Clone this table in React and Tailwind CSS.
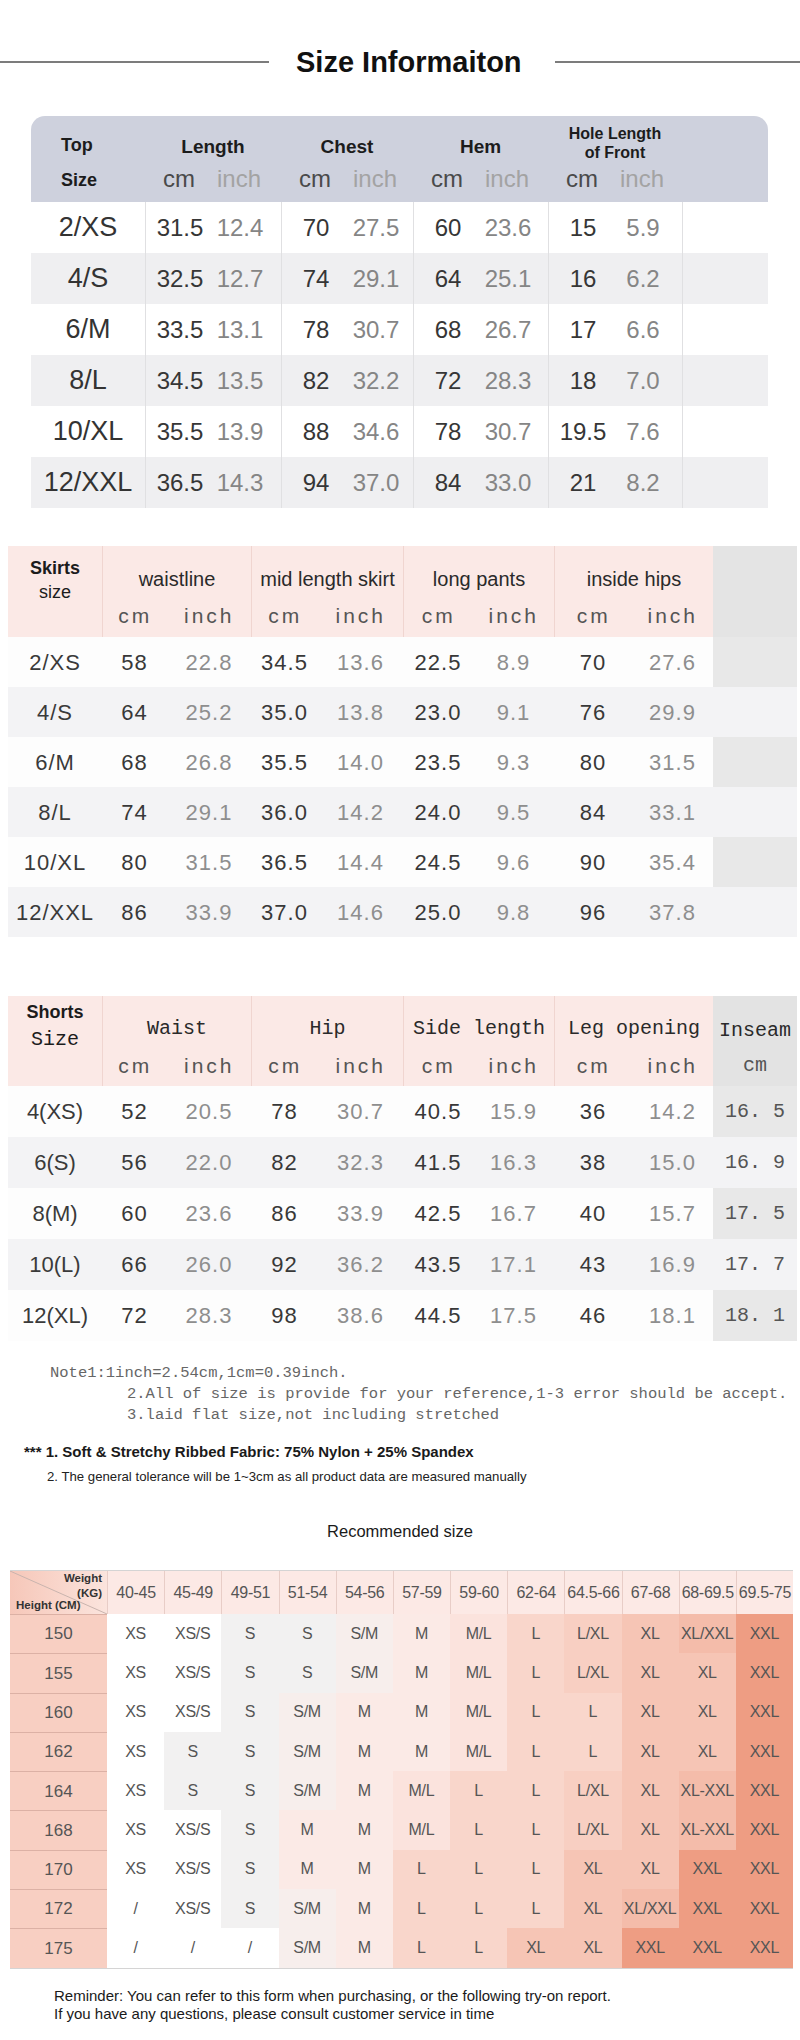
import React from 'react';

const sans = "font-['Liberation_Sans',Arial,sans-serif]";
const mono = "font-['Liberation_Mono','Courier_New',monospace]";

const topHeads = ['Length', 'Chest', 'Hem', 'Hole'];
const topW = ['w-[136px]', 'w-[132px]', 'w-[135px]', 'w-[134px]'];
const topRows = [
  ['2/XS', '31.5', '12.4', '70', '27.5', '60', '23.6', '15', '5.9'],
  ['4/S', '32.5', '12.7', '74', '29.1', '64', '25.1', '16', '6.2'],
  ['6/M', '33.5', '13.1', '78', '30.7', '68', '26.7', '17', '6.6'],
  ['8/L', '34.5', '13.5', '82', '32.2', '72', '28.3', '18', '7.0'],
  ['10/XL', '35.5', '13.9', '88', '34.6', '78', '30.7', '19.5', '7.6'],
  ['12/XXL', '36.5', '14.3', '94', '37.0', '84', '33.0', '21', '8.2'],
];

// sub columns shared by skirts + shorts (cm / inch pairs)
const subW = ['w-[65px]', 'w-[84px]', 'w-[67px]', 'w-[85px]', 'w-[70px]', 'w-[81px]', 'w-[78px]', 'w-[81px]'];
const groupW = ['w-[149px]', 'w-[152px]', 'w-[151px]', 'w-[159px]'];

const skirtRows = [
  ['2/XS', '58', '22.8', '34.5', '13.6', '22.5', '8.9', '70', '27.6'],
  ['4/S', '64', '25.2', '35.0', '13.8', '23.0', '9.1', '76', '29.9'],
  ['6/M', '68', '26.8', '35.5', '14.0', '23.5', '9.3', '80', '31.5'],
  ['8/L', '74', '29.1', '36.0', '14.2', '24.0', '9.5', '84', '33.1'],
  ['10/XL', '80', '31.5', '36.5', '14.4', '24.5', '9.6', '90', '35.4'],
  ['12/XXL', '86', '33.9', '37.0', '14.6', '25.0', '9.8', '96', '37.8'],
];

const shortRows = [
  ['4(XS)', '52', '20.5', '78', '30.7', '40.5', '15.9', '36', '14.2', '16. 5'],
  ['6(S)', '56', '22.0', '82', '32.3', '41.5', '16.3', '38', '15.0', '16. 9'],
  ['8(M)', '60', '23.6', '86', '33.9', '42.5', '16.7', '40', '15.7', '17. 5'],
  ['10(L)', '66', '26.0', '92', '36.2', '43.5', '17.1', '43', '16.9', '17. 7'],
  ['12(XL)', '72', '28.3', '98', '38.6', '44.5', '17.5', '46', '18.1', '18. 1'],
];

const weights = ['40-45', '45-49', '49-51', '51-54', '54-56', '57-59', '59-60', '62-64', '64.5-66', '67-68', '68-69.5', '69.5-75'];
const rec = [
  ['150', ['XS', 'XS/S', 'S', 'S', 'S/M', 'M', 'M/L', 'L', 'L/XL', 'XL', 'XL/XXL', 'XXL']],
  ['155', ['XS', 'XS/S', 'S', 'S', 'S/M', 'M', 'M/L', 'L', 'L/XL', 'XL', 'XL', 'XXL']],
  ['160', ['XS', 'XS/S', 'S', 'S/M', 'M', 'M', 'M/L', 'L', 'L', 'XL', 'XL', 'XXL']],
  ['162', ['XS', 'S', 'S', 'S/M', 'M', 'M', 'M/L', 'L', 'L', 'XL', 'XL', 'XXL']],
  ['164', ['XS', 'S', 'S', 'S/M', 'M', 'M/L', 'L', 'L', 'L/XL', 'XL', 'XL-XXL', 'XXL']],
  ['168', ['XS', 'XS/S', 'S', 'M', 'M', 'M/L', 'L', 'L', 'L/XL', 'XL', 'XL-XXL', 'XXL']],
  ['170', ['XS', 'XS/S', 'S', 'M', 'M', 'L', 'L', 'L', 'XL', 'XL', 'XXL', 'XXL']],
  ['172', ['/', 'XS/S', 'S', 'S/M', 'M', 'L', 'L', 'L', 'XL', 'XL/XXL', 'XXL', 'XXL']],
  ['175', ['/', '/', '/', 'S/M', 'M', 'L', 'L', 'XL', 'XL', 'XXL', 'XXL', 'XXL']],
];

const sizeBg = {
  '/': 'bg-white',
  XS: 'bg-white',
  'XS/S': 'bg-white',
  S: 'bg-[#f2f1f1]',
  'S/M': 'bg-[#f7eeec]',
  M: 'bg-[#fbeae6]',
  'M/L': 'bg-[#fbe3dd]',
  L: 'bg-[#f9d6cb]',
  'L/XL': 'bg-[#f8cfc2]',
  XL: 'bg-[#f6c5b5]',
  'XL/XXL': 'bg-[#f4bcaa]',
  'XL-XXL': 'bg-[#f4bcaa]',
  XXL: 'bg-[#ee9d83]',
};

function TopTable() {
  return (
    <div className="ml-[31px] mt-[37px] w-[737px]">
      <div className="flex h-[86px] rounded-t-[14px] bg-[#ced1dd] text-[#1c1c1c]">
        <div className="w-[114px] pl-[30px] pt-[18px] text-[18px] font-bold leading-[22px]">
          <div>Top</div>
          <div className="mt-[13px]">Size</div>
        </div>
        {topHeads.map((h, i) => (
          <div key={h} className={`${topW[i]} flex flex-col pt-[11px]`}>
            <div className="flex h-[40px] flex-col items-center justify-center font-bold">
              {h === 'Hole' ? (
                <div className="-mt-[8px] text-center text-[16px] leading-[19px]">
                  <div>Hole Length</div>
                  <div>of Front</div>
                </div>
              ) : (
                <span className="text-[19px] leading-[24px]">{h}</span>
              )}
            </div>
            <div className="flex text-[24px] leading-[24px]">
              <span className="w-[68px] text-center text-[#4a4a4a]">cm</span>
              <span className="w-[52px] text-center text-[#a3a3a3]">inch</span>
            </div>
          </div>
        ))}
      </div>
      {topRows.map((r, idx) => (
        <div
          key={r[0]}
          className={`flex h-[51px] items-center ${idx % 2 ? 'bg-[#efeff1]' : 'bg-white'}`}
        >
          <div className="w-[114px] text-center text-[27px] text-[#333]">{r[0]}</div>
          {topW.map((w, i) => (
            <div key={w} className={`${w} flex h-full items-center border-l border-[#e0e0e2] text-[24px]`}>
              <span className="w-[68px] text-center text-[#363636]">{r[1 + i * 2]}</span>
              <span className="w-[52px] text-center text-[#858585]">{r[2 + i * 2]}</span>
            </div>
          ))}
          <div className="h-full w-[86px] border-l border-[#e0e0e2]" />
        </div>
      ))}
    </div>
  );
}

function GroupHead({ title, w, idx, titleClass, unitClass }) {
  return (
    <div className={`${w} flex flex-col border-l border-[#f0d5d0] bg-[#fbe9e6] pt-[21px]`}>
      <div className={`text-center leading-[24px] text-[#2a2a2a] ${titleClass}`}>{title}</div>
      <div className={`mt-[11px] flex leading-[28px] text-[#555] ${unitClass}`}>
        <span className={`${subW[idx * 2]} text-center`}>cm</span>
        <span className={`${subW[idx * 2 + 1]} text-center`}>inch</span>
      </div>
    </div>
  );
}

function PinkRow({ label, vals, shade, extra, height, labelClass }) {
  return (
    <div className={`flex ${height} items-center ${shade ? 'bg-[#f3f3f5]' : 'bg-[#fdfdfd]'}`}>
      <div className={`w-[94px] text-center text-[#3a3a3a] ${labelClass}`}>{label}</div>
      {vals.map((v, i) => (
        <div
          key={i}
          className={`${subW[i]} text-center text-[22px] tracking-[1px] ${i % 2 ? 'text-[#8e8e8e]' : 'text-[#383838]'}`}
        >
          {v}
        </div>
      ))}
      <div
        className={`flex h-full w-[84px] items-center justify-center ${mono} text-[20px] text-[#555] ${
          shade ? '' : 'bg-[#e8e8e8]'
        }`}
      >
        {extra}
      </div>
    </div>
  );
}

function SkirtsTable() {
  const groups = ['waistline', 'mid length skirt', 'long pants', 'inside hips'];
  return (
    <div className="ml-[8px] mt-[38px] w-[789px]">
      <div className="flex h-[91px]">
        <div className="flex w-[94px] flex-col items-center bg-[#fbe9e6] pt-[10px] text-[#1c1c1c]">
          <span className="text-[18px] font-bold leading-[24px]">Skirts</span>
          <span className="text-[18px] leading-[24px]">size</span>
        </div>
        {groups.map((g, i) => (
          <GroupHead
            key={g}
            title={g}
            w={groupW[i]}
            idx={i}
            titleClass="text-[20px]"
            unitClass="text-[21px] tracking-[3px]"
          />
        ))}
        <div className="w-[84px] bg-[#e4e4e4]" />
      </div>
      {skirtRows.map((r, idx) => (
        <PinkRow
          key={r[0]}
          label={r[0]}
          vals={r.slice(1)}
          shade={idx % 2 === 1}
          extra=""
          height="h-[50px]"
          labelClass="text-[22px] tracking-[1px]"
        />
      ))}
    </div>
  );
}

function ShortsTable() {
  const groups = ['Waist', 'Hip', 'Side length', 'Leg opening'];
  return (
    <div className="ml-[8px] mt-[59px] w-[789px]">
      <div className="flex h-[90px]">
        <div className="flex w-[94px] flex-col items-center bg-[#fbe9e6] pt-[4px] text-[#1c1c1c]">
          <span className="text-[18px] font-bold leading-[24px]">Shorts</span>
          <span className={`${mono} mt-[4px] text-[20px] leading-[24px]`}>Size</span>
        </div>
        {groups.map((g, i) => (
          <GroupHead
            key={g}
            title={g}
            w={groupW[i]}
            idx={i}
            titleClass={`${mono} text-[20px]`}
            unitClass="text-[21px] tracking-[3px]"
          />
        ))}
        <div className={`flex w-[84px] flex-col items-center bg-[#e3e3e3] pt-[23px] ${mono} text-[20px] text-[#2a2a2a]`}>
          <span className="leading-[24px]">Inseam</span>
          <span className="mt-[11px] leading-[24px] text-[#555]">cm</span>
        </div>
      </div>
      {shortRows.map((r, idx) => (
        <PinkRow
          key={r[0]}
          label={r[0]}
          vals={r.slice(1, 9)}
          shade={idx % 2 === 1}
          extra={r[9]}
          height="h-[51px]"
          labelClass="text-[22px]"
        />
      ))}
    </div>
  );
}

function Notes() {
  return (
    <div>
      <div className={`${mono} mt-[22px] text-[15.5px] leading-[21px] text-[#666]`}>
        <div className="pl-[50px]">Note1:1inch=2.54cm,1cm=0.39inch.</div>
        <div className="pl-[127px]">2.All of size is provide for your reference,1-3 error should be accept.</div>
        <div className="pl-[127px]">3.laid flat size,not including stretched</div>
      </div>
      <div className="mt-[16px] pl-[24px] text-[15px] font-bold leading-[20px] text-[#1a1a1a]">
        *** 1. Soft &amp; Stretchy Ribbed Fabric: 75% Nylon + 25% Spandex
      </div>
      <div className="mt-[6px] pl-[47px] text-[13.2px] leading-[18px] text-[#222]">
        2. The general tolerance will be 1~3cm as all product data are measured manually
      </div>
      <div className="mt-[35px] text-center text-[16.5px] leading-[20px] text-[#1a1a1a]">
        Recommended size
      </div>
    </div>
  );
}

function RecTable() {
  return (
    <div className="ml-[10px] mt-[29px] w-[783px] border-t border-[#d4d4d4] text-[#555]">
      <div className="grid h-[43px] grid-cols-[97px_repeat(12,minmax(0,1fr))]">
        <div className="relative bg-gradient-to-r from-[#f6c7b9] to-[#fbe4dd] text-[11.5px] font-bold leading-[14px] text-[#333]">
          <svg className="absolute inset-0 h-full w-full" viewBox="0 0 97 43" preserveAspectRatio="none">
            <line x1="0" y1="0" x2="97" y2="43" stroke="#c9b4ae" strokeWidth="1" />
          </svg>
          <div className="relative pr-[5px] text-right">
            <div>Weight</div>
            <div className="mt-[1px]">(KG)</div>
          </div>
          <div className="relative -mt-[2px] pl-[6px]">Height (CM)</div>
        </div>
        {weights.map((w) => (
          <div
            key={w}
            className="flex items-center justify-center border-l border-[#e8cdc7] bg-[#fce9e5] text-[16px] tracking-[-0.3px]"
          >
            {w}
          </div>
        ))}
      </div>
      {rec.map(([h, cells]) => (
        <div key={h} className="grid h-[39.3px] grid-cols-[97px_repeat(12,minmax(0,1fr))] text-[16px]">
          <div className="flex items-center justify-center border-t border-[#dcb1a5] bg-[#f8cfc2] text-[17px]">
            {h}
          </div>
          {cells.map((c, i) => (
            <div key={i} className={`flex items-center justify-center tracking-[-0.3px] ${sizeBg[c]}`}>
              {c}
            </div>
          ))}
        </div>
      ))}
      <div className="h-[1px] bg-[#d4d4d4]" />
    </div>
  );
}

export default function App() {
  return (
    <div className={`h-[2040px] w-[800px] overflow-hidden bg-white ${sans}`}>
      <div className="flex items-center pt-[45px]">
        <div className="h-[2px] w-[269px] bg-[#7c7c7c]" />
        <h1 className="ml-[27px] text-[29px] font-bold leading-[34px] text-[#111]">Size Informaiton</h1>
        <div className="ml-[33px] h-[2px] flex-1 bg-[#7c7c7c]" />
      </div>

      <TopTable />
      <SkirtsTable />
      <ShortsTable />
      <Notes />
      <RecTable />

      <div className="mt-[18px] pl-[54px] text-[15px] leading-[18px] text-[#1a1a1a]">
        <div>Reminder: You can refer to this form when purchasing, or the following try-on report.</div>
        <div>If you have any questions, please consult customer service in time</div>
      </div>
    </div>
  );
}
